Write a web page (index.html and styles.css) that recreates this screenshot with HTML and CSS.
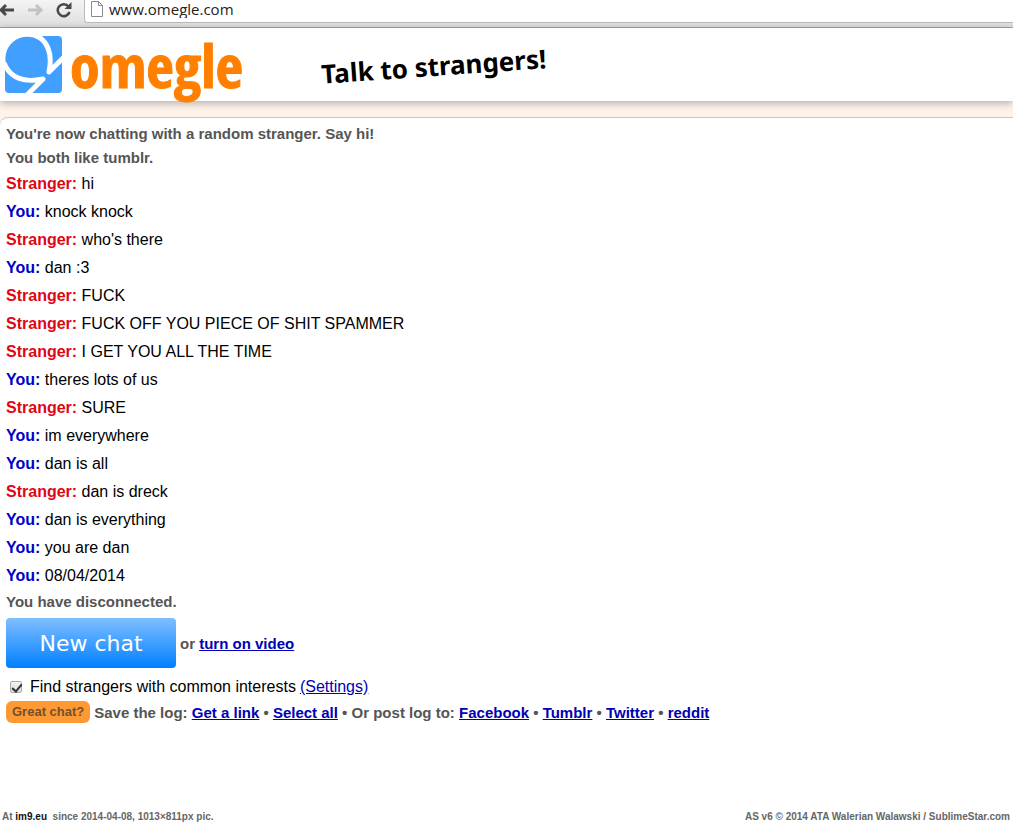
FILE: index.html
```html
<!DOCTYPE html>
<html lang="en">
<head>
    <meta charset="UTF-8">
    <meta name="viewport" content="width=device-width, initial-scale=1.0">
    <title>Omegle: Talk to strangers!</title>
    <link rel="stylesheet" href="styles.css">
</head>
<body>
    <div class="toolbar">
        <button class="nav" type="button" aria-label="Back">
            <svg width="16" height="16" viewBox="0 0 16 16"><path d="M14 8H1M6 3L1 8l5 5" fill="none" stroke="#484848" stroke-width="3"/></svg>
        </button>
        <button class="nav" type="button" aria-label="Forward">
            <svg width="16" height="16" viewBox="0 0 16 16"><path d="M0 8h13M8 3l5 5-5 5" fill="none" stroke="#c2c2c2" stroke-width="3"/></svg>
        </button>
        <button class="nav" type="button" aria-label="Reload">
            <svg width="16" height="16" viewBox="0 0 16 16"><path d="M12.500 4.500A6 6 0 1 0 13.500 10" fill="none" stroke="#484848" stroke-width="2.500"/><path d="M15.500 0v7H8.500z" fill="#484848"/></svg>
        </button>
        <div class="address">
            <svg width="12" height="16" viewBox="0 0 12 16"><path d="M.5.5h7l4 4v11H.5zM7.500.5v4h4" fill="#fff" stroke="#8a8a8a"/></svg>
            <input type="text" value="www.omegle.com" aria-label="Address">
        </div>
    </div>

    <header class="header">
        <svg class="logo" width="57" height="57" viewBox="0 0 57 57">
            <rect width="57" height="57" rx="4" fill="#409fff"/>
            <path d="M0 0H34V4A22 22 0 0 0 2 31L0 33Z" fill="#fff"/>
            <circle cx="21.500" cy="21.500" r="19.500" fill="#409fff"/>
            <path d="M30 -1C42 4 48 17 44 36L59 21M-1 27C5 42 19 47 38 43L22 59" fill="none" stroke="#fff" stroke-width="5" stroke-linejoin="round"/>
        </svg>
        <span class="brand">omegle</span>
        <span class="tagline">Talk to strangers!</span>
    </header>

    <main class="chat">
        <p class="status">You're now chatting with a random stranger. Say hi!</p>
        <p class="status">You both like tumblr.</p>
        <p class="message"><strong class="stranger">Stranger:</strong> hi</p>
        <p class="message"><strong class="you">You:</strong> knock knock</p>
        <p class="message"><strong class="stranger">Stranger:</strong> who's there</p>
        <p class="message"><strong class="you">You:</strong> dan :3</p>
        <p class="message"><strong class="stranger">Stranger:</strong> FUCK</p>
        <p class="message"><strong class="stranger">Stranger:</strong> FUCK OFF YOU PIECE OF SHIT SPAMMER</p>
        <p class="message"><strong class="stranger">Stranger:</strong> I GET YOU ALL THE TIME</p>
        <p class="message"><strong class="you">You:</strong> theres lots of us</p>
        <p class="message"><strong class="stranger">Stranger:</strong> SURE</p>
        <p class="message"><strong class="you">You:</strong> im everywhere</p>
        <p class="message"><strong class="you">You:</strong> dan is all</p>
        <p class="message"><strong class="stranger">Stranger:</strong> dan is dreck</p>
        <p class="message"><strong class="you">You:</strong> dan is everything</p>
        <p class="message"><strong class="you">You:</strong> you are dan</p>
        <p class="message"><strong class="you">You:</strong> 08/04/2014</p>
        <p class="status">You have disconnected.</p>
        <div class="restart">
            <button class="newchat" type="button">New chat</button>
            <span>or <a href="#">turn on video</a></span>
        </div>
        <div class="interests">
            <input type="checkbox" id="interests" checked>
            <label for="interests">Find strangers with common interests</label>
            <a href="#">(Settings)</a>
        </div>
        <div class="log">
            <span class="great">Great chat?</span>
            <span>Save the log: <a href="#">Get a link</a> • <a href="#">Select all</a> • Or post log to: <a href="#">Facebook</a> • <a href="#">Tumblr</a> • <a href="#">Twitter</a> • <a href="#">reddit</a></span>
        </div>
    </main>

    <footer class="footer">
        <span>At <b>im9.eu</b>&nbsp; since 2014-04-08, 1013×811px pic.</span>
        <span>AS v6 © 2014 ATA Walerian Walawski / SublimeStar.com</span>
    </footer>
</body>
</html>
```
FILE: styles.css
```css
* {
    box-sizing: border-box;
}
body {
    margin: 0;
    min-height: 100vh;
    display: flex;
    flex-direction: column;
    font-family: Arial, "Liberation Sans", sans-serif;
    font-size: 16px;
    color: #000;
    background-color: #fdf3eb;
}
a {
    color: #0000b4;
}
.toolbar {
    display: flex;
    align-items: flex-start;
    height: 28px;
    background: linear-gradient(#f4f4f4, #dedede);
    border-bottom: 1px solid #a3a3a3;
}
.nav {
    width: 28px;
    height: 18px;
    padding: 1px 0 0;
    border: none;
    background: none;
    text-align: left;
}
.nav svg {
    display: block;
}
.address {
    flex: 1;
    display: flex;
    align-items: center;
    gap: 6px;
    height: 23px;
    padding: 0 0 4px 6px;
    background-color: #fff;
    border: solid #bbb;
    border-width: 0 0 1px 1px;
    border-bottom-left-radius: 3px;
}
.address input {
    flex: 1;
    padding: 0;
    border: none;
    background: none;
    font-family: "Open Sans", sans-serif;
    font-size: 15px;
    line-height: 18px;
    color: #222;
}
.header {
    display: flex;
    align-items: center;
    height: 73px;
    padding-left: 5px;
    background-color: #fff;
    box-shadow: 0 2px 8px rgba(0, 0, 0, 0.3);
}
.brand {
    margin-left: 8px;
    font-family: "Liberation Sans Narrow", "Open Sans Condensed", "DejaVu Sans Condensed", sans-serif;
    font-size: 60px;
    line-height: 72px;
    font-weight: bold;
    color: #ff8000;
    -webkit-text-stroke: 1px #ff8000;
}
.tagline {
    margin: 3px 0 0 78px;
    font-family: "Noto Sans", sans-serif;
    font-size: 26px;
    line-height: 36px;
    font-weight: bold;
    transform: rotate(-4deg);
}
.chat {
    flex: 1;
    z-index: 1;
    margin-top: 16px;
    padding: 4px 6px;
    background-color: #fff;
    border-top: 1px solid #c8c4c0;
    border-top-left-radius: 8px;
}
.status, .message {
    margin: 0;
}
.status {
    font-size: 15px;
    line-height: 24px;
    font-weight: bold;
    color: #555;
}
.message {
    line-height: 28px;
}
.stranger {
    color: #e00614;
}
.you {
    color: #0000c8;
}
.restart, .log {
    display: flex;
    align-items: center;
    gap: 4px;
    font-size: 15px;
    font-weight: bold;
    color: #555;
}
.restart {
    margin-top: 4px;
}
.newchat {
    width: 170px;
    height: 50px;
    border: none;
    border-radius: 4px;
    background: linear-gradient(#80beff, #409fff 50%, #007fff);
    color: #fff;
    font-family: "DejaVu Sans", sans-serif;
    font-size: 22px;
}
.interests {
    display: flex;
    align-items: center;
    gap: 4px;
    margin: 6px 0 1px;
    line-height: 26px;
}
.interests input {
    appearance: none;
    width: 12px;
    height: 12px;
    margin: 0 4px;
    border: 1px solid #aaa;
    border-radius: 2px;
    background: linear-gradient(#f2f2f2, #ddd);
}
.interests input:checked::after {
    content: "";
    display: block;
    width: 4px;
    height: 8px;
    margin-left: 3px;
    border: solid #333;
    border-width: 0 2px 2px 0;
    transform: rotate(40deg);
}
.great {
    padding: 0 6px;
    border-radius: 6px;
    background-color: #ff9933;
    font-size: 13px;
    line-height: 22px;
    color: #735029;
}
.footer {
    display: flex;
    justify-content: space-between;
    padding: 0 3px 0 2px;
    background-color: #fff;
    font-size: 10px;
    line-height: 12px;
    font-weight: bold;
    color: #666;
}
.footer b {
    color: #111;
}
```
